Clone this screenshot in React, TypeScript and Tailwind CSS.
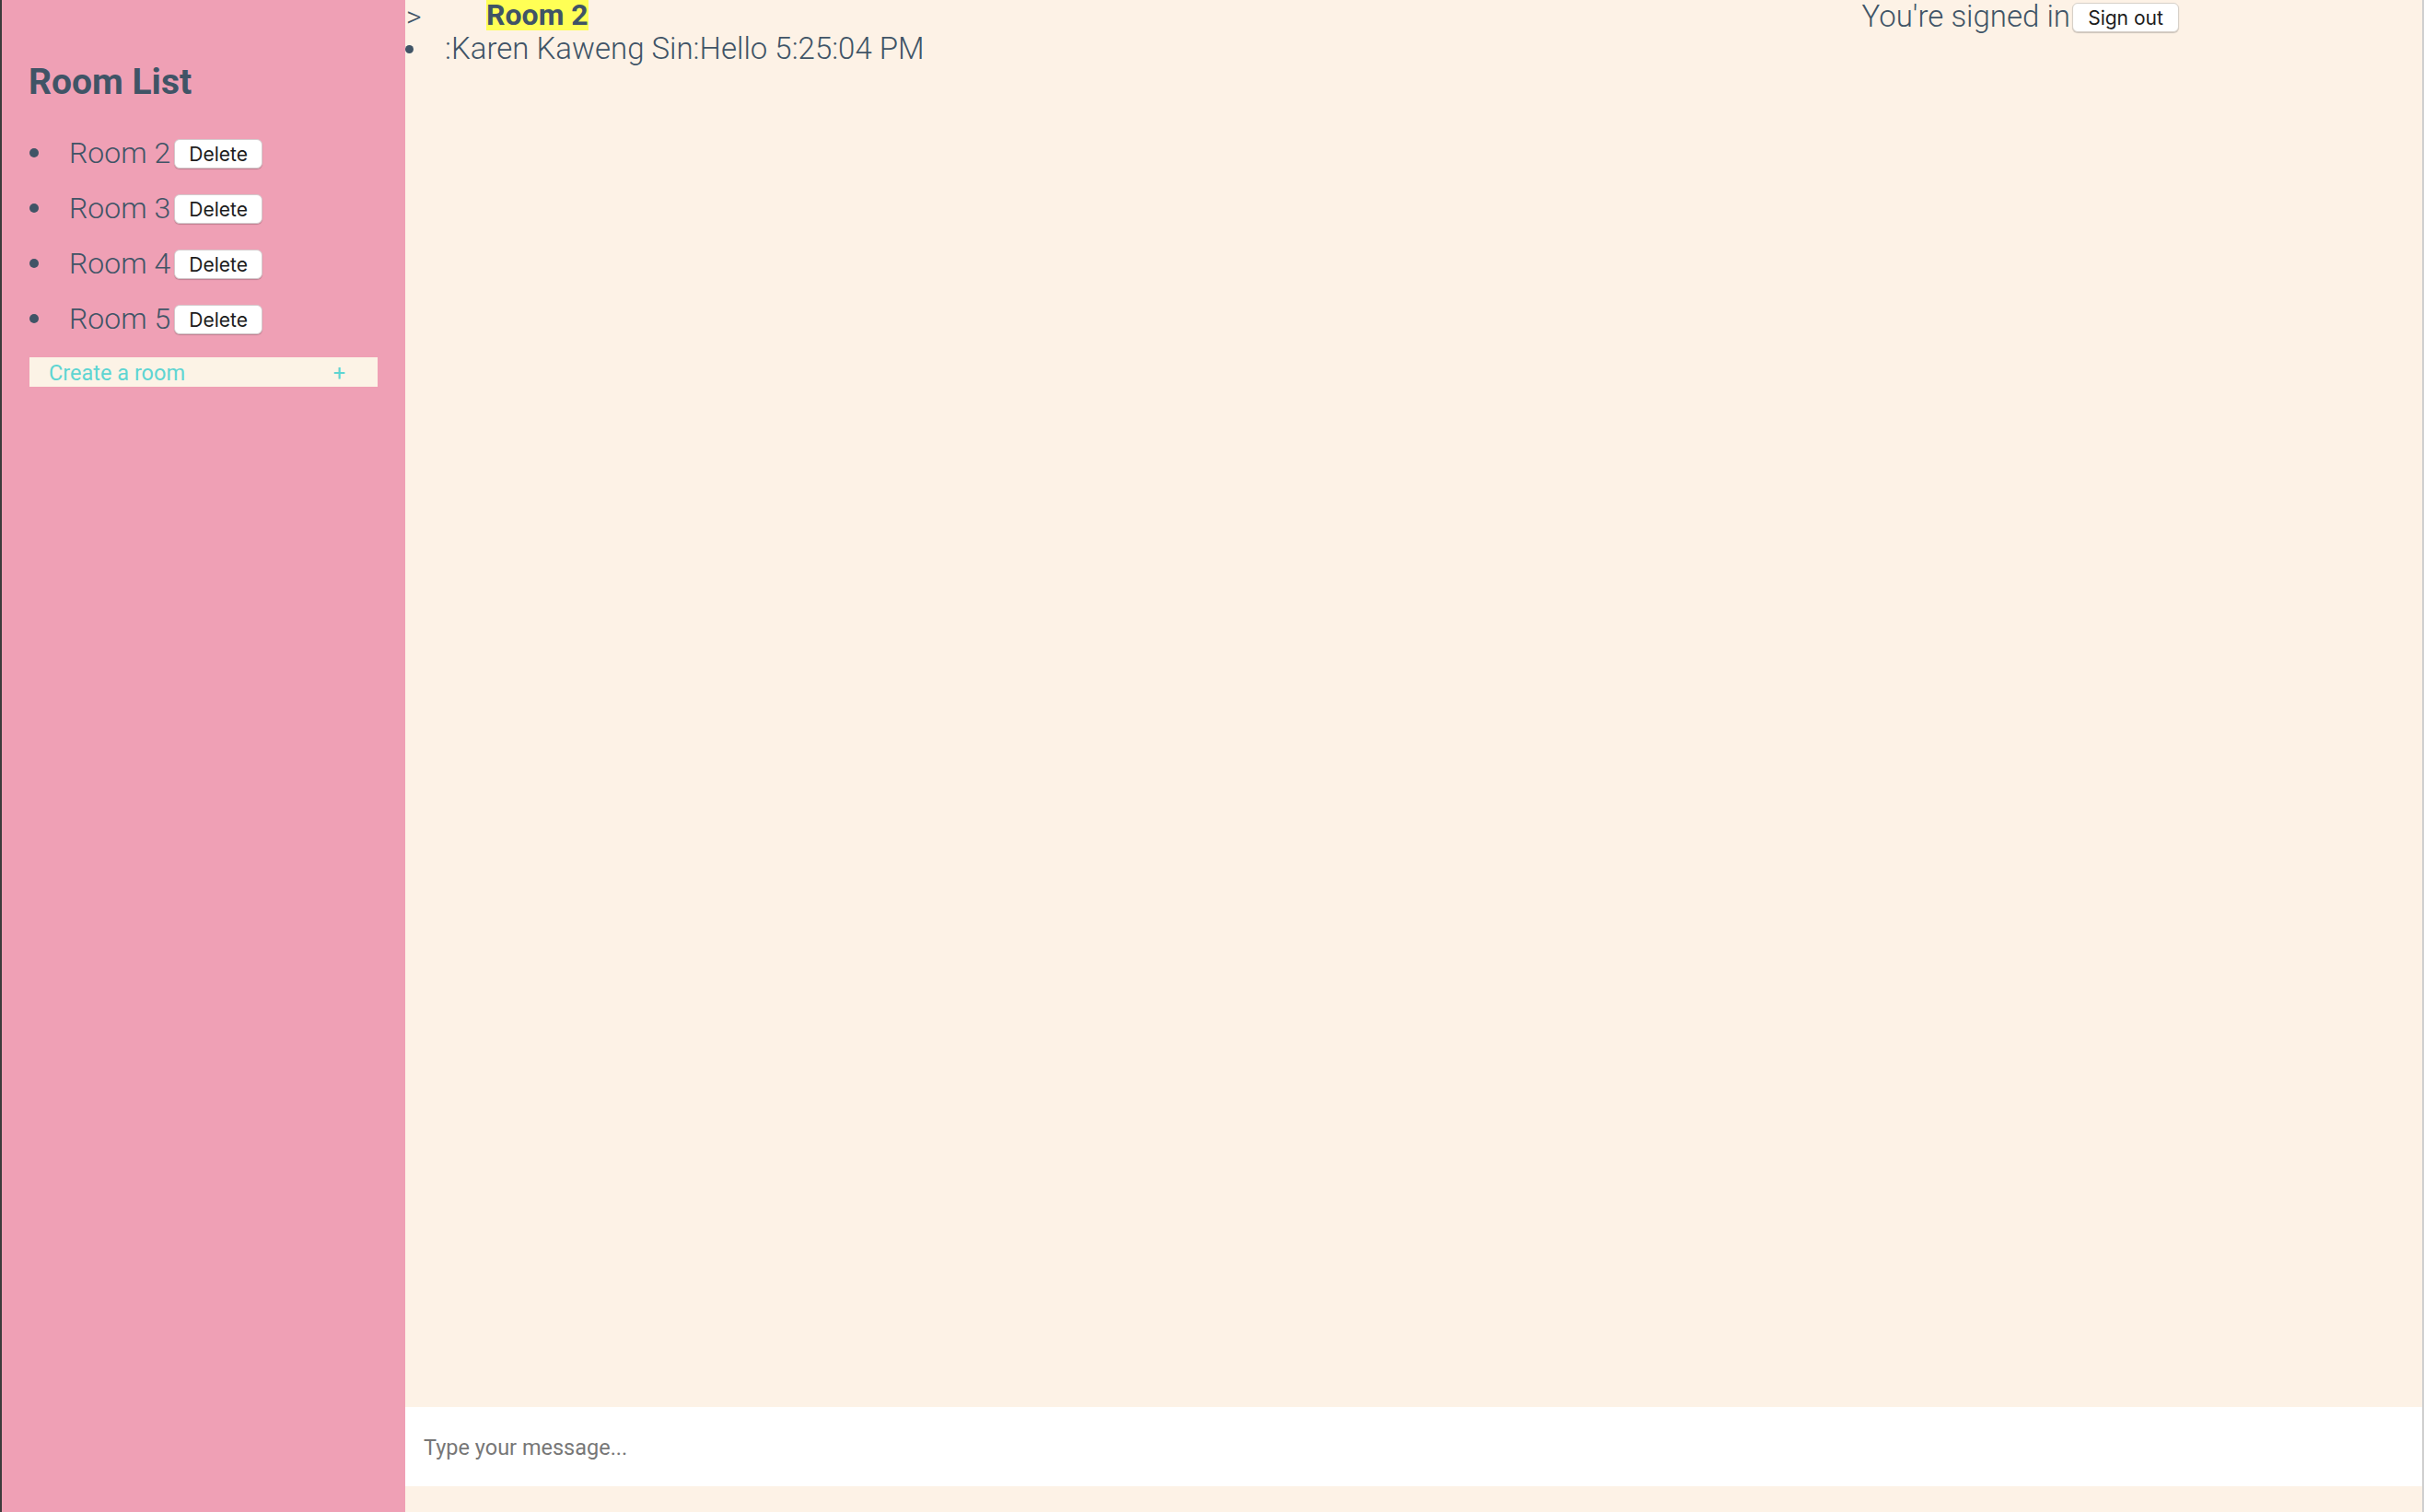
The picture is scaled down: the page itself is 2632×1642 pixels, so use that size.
import React from 'react';

const rooms = ['Room 2', 'Room 3', 'Room 4', 'Room 5'];

const App = () => {
  return (
    <div className="flex h-[1642px] w-[2632px] border-l-2 border-r-2 border-l-[#3b3b3b] border-r-[#cfcfcf] bg-[#fdf2e6] font-['Roboto',sans-serif] text-[#405466]">
      {/* Sidebar */}
      <aside className="w-[438px] shrink-0 bg-[#efa0b5] pt-[70px]">
        <h2 className="pl-[29px] text-[39px] font-bold leading-[38px]">Room List</h2>

        <ul className="mt-[28px]">
          {rooms.map((room) => (
            <li key={room} className="flex h-[60px] items-center pl-[30px]">
              <span className="h-[10px] w-[10px] shrink-0 rounded-full bg-[#405466]"></span>
              <span className="ml-[33px] text-[32px] font-light leading-[60px]">{room}</span>
              <button className="ml-[4px] mt-[2px] h-[32px] w-[96px] rounded-[6px] border border-[#d4c9cc] bg-white font-['Inter',sans-serif] text-[21px] text-[#1c1c1c] shadow-[0_1px_1px_rgba(0,0,0,0.2)]">
                Delete
              </button>
            </li>
          ))}
        </ul>

        <div className="ml-[30px] mt-[12px] flex h-[32px] w-[378px] items-center bg-[#fcf3e6] pl-[21px] pr-[35px] pt-[3px] text-[23.5px] text-[#5ed5d2]">
          <span>Create a room</span>
          <span className="ml-auto">+</span>
        </div>
      </aside>

      {/* Chat area */}
      <main className="flex flex-1 flex-col">
        <div className="flex h-[34px] items-start">
          <span className="w-[88px] pl-[1px] text-[32px] font-light leading-[36px]">&gt;</span>
          <h3 className="bg-[#ffff55] text-[32px] font-bold leading-[33px]">Room 2</h3>
          <div className="ml-auto flex items-start pr-[264px]">
            <span className="text-[33px] font-light leading-[36px]">You're signed in</span>
            <button className="ml-[2px] mt-[3px] h-[32px] w-[116px] rounded-[6px] border border-[#d6d0c8] bg-white font-['Inter',sans-serif] text-[21px] text-[#1c1c1c] shadow-[0_1px_1px_rgba(0,0,0,0.2)]">
              Sign out
            </button>
          </div>
        </div>

        <ul>
          <li className="flex h-[38px] items-center">
            <span className="h-[9px] w-[9px] shrink-0 rounded-full bg-[#405466]"></span>
            <span className="ml-[34px] text-[33px] font-light leading-[38px]">:Karen Kaweng Sin:Hello 5:25:04 PM</span>
          </li>
        </ul>

        <div className="flex-1"></div>

        <div className="mb-[28px] flex h-[86px] items-center bg-white pl-[20px] pt-[3px]">
          <input
            type="text"
            placeholder="Type your message..."
            className="w-full bg-transparent font-['Roboto',sans-serif] text-[23.5px] text-[#333] outline-none placeholder:text-[#777]"
          />
        </div>
      </main>
    </div>
  );
};

export default App;
